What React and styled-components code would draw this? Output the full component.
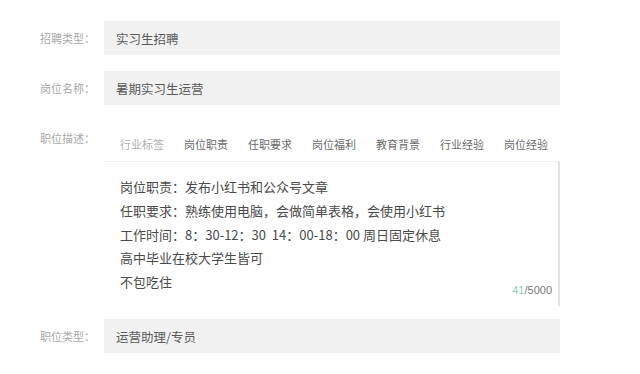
import React from "react";
import styled, { createGlobalStyle } from "styled-components";

const Global = createGlobalStyle`
  html, body { margin: 0; padding: 0; background: #fff; }
  body { font-family: "Noto Sans CJK SC", "Noto Sans", sans-serif; }
`;

const Form = styled.div`
  width: 640px;
  height: 374px;
  padding-top: 21px;
  box-sizing: border-box;
  display: flex;
  flex-direction: column;
`;

const Row = styled.div`
  display: grid;
  grid-template-columns: 96px 456px;
  column-gap: 8px;
  align-items: ${(p) => (p.$top ? "start" : "center")};
  margin-top: ${(p) => p.$mt || 0}px;
`;

const Label = styled.div`
  font-size: 11px;
  color: #a8a8a8;
  text-align: right;
  padding-right: 1px;
  line-height: ${(p) => (p.$top ? "16px" : "34px")};
  padding-top: ${(p) => (p.$top ? 4 : 0)}px;
`;

const Input = styled.div`
  height: 34px;
  background: #f1f1f1;
  display: flex;
  align-items: center;
  padding-left: 12px;
  font-size: 12.5px;
  color: #595959;
`;

const Desc = styled.div`
  display: flex;
  flex-direction: column;
`;

const Tabs = styled.div`
  display: flex;
  height: 35px;
  align-items: center;
  padding-left: 16px;
  gap: 20px;
`;

const Tab = styled.span`
  font-size: 11px;
  color: ${(p) => (p.$muted ? "#b0b0b0" : "#6a6a6a")};
  width: 44px;
  white-space: nowrap;
`;

const Box = styled.div`
  position: relative;
  height: 145px;
  border-top: 1px solid #f2f2f2;
  border-right: 2px solid #e2e2e2;
  box-sizing: border-box;
  padding: 13px 16px 0 16px;
`;

const Line = styled.div`
  font-size: 13px;
  line-height: 23.8px;
  color: #4a4a4a;
  white-space: pre;
`;

const Counter = styled.div`
  position: absolute;
  right: 6px;
  bottom: 10px;
  font-size: 11px;
  color: #777;
  font-family: "Liberation Sans", sans-serif;
`;

const Count = styled.span`
  color: #8ccbb8;
`;

const tabs = ["行业标签", "岗位职责", "任职要求", "岗位福利", "教育背景", "行业经验", "岗位经验"];

const lines = [
  "岗位职责：发布小红书和公众号文章",
  "任职要求：熟练使用电脑，会做简单表格，会使用小红书",
  "工作时间：8：30-12：30  14：00-18：00 周日固定休息",
  "高中毕业在校大学生皆可",
  "不包吃住",
];

export default function App() {
  return (
    <>
      <Global />
      <Form>
        <Row>
          <Label>招聘类型：</Label>
          <Input>实习生招聘</Input>
        </Row>
        <Row $mt={16}>
          <Label>岗位名称：</Label>
          <Input>暑期实习生运营</Input>
        </Row>
        <Row $top $mt={21}>
          <Label $top>职位描述：</Label>
          <Desc>
            <Tabs>
              {tabs.map((t, i) => (
                <Tab key={t} $muted={i === 0}>{t}</Tab>
              ))}
            </Tabs>
            <Box>
              {lines.map((l) => (
                <Line key={l}>{l}</Line>
              ))}
              <Counter>
                <Count>41</Count>/5000
              </Counter>
            </Box>
          </Desc>
        </Row>
        <Row $mt={13}>
          <Label>职位类型：</Label>
          <Input>运营助理/专员</Input>
        </Row>
      </Form>
    </>
  );
}
